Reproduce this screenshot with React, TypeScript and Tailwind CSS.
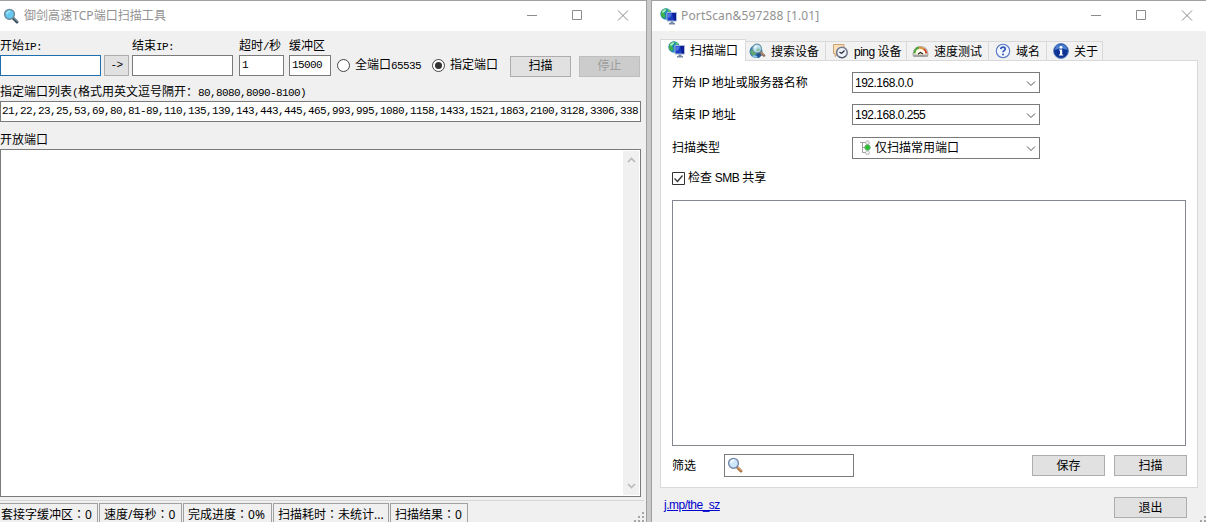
import React from "react";

const song = "font-['Liberation_Mono','Noto_Sans_CJK_SC',monospace]";
const sans = "font-['Liberation_Sans','Noto_Sans_CJK_SC',sans-serif]";
const ui = "font-['Noto_Sans','Noto_Sans_CJK_SC',sans-serif]";

function Half({ children }: { children: React.ReactNode }) {
  return <span className="text-[11px] tracking-[-0.6px]">{children}</span>;
}

function Latin({ children }: { children: React.ReactNode }) {
  return <span className="text-[12px] tracking-[-0.5px]">{children}</span>;
}

function Caption() {
  return (
    <svg width="106" height="30" viewBox="0 0 106 30" fill="none" stroke="#8c8c8c" className="shrink-0">
      <path d="M3 14.5h10M48.5 9.5h9v9h-9zM94 9.5l10 10M104 9.5l-10 10" />
    </svg>
  );
}

function Globe() {
  return (
    <svg width="17" height="17" viewBox="0 0 17 17" className="shrink-0">
      <circle cx="6" cy="6" r="5.7" fill="#1c86c4" />
      <path d="M1 4Q3 0 7 .5L6 3.5 4 5 5.5 8 4 10.5 1 8z" fill="#3fb04c" />
      <path d="M8 1l2.5 1.5-1 2L7.5 3z" fill="#5cc766" />
      <path d="M2 3.5Q4 1 6.5 1.2L5 3.5 3 5z" fill="#a8f0dc" />
      <path d="M7 4.5h9.5v8.5H7z" fill="#1c3cc0" stroke="#a9b9d8" />
      <path d="M12 5h4v7.5h-2z" fill="#0d1f97" />
      <path d="M8 5.5h4l-2 4H8z" fill="#4d74e6" />
      <path d="M10.5 13.5h3V15H15v1.5H9V15h1.5z" fill="#7287a3" />
    </svg>
  );
}

function SearchGlobe() {
  return (
    <svg width="17" height="17" viewBox="0 0 17 17" className="shrink-0">
      <circle cx="7" cy="8.5" r="6.5" fill="#3a7bb2" />
      <path d="M1 9l3-4 3 1 1 4-4 3z" fill="#5fa96a" />
      <path d="M8 10l4-2 1 4-3 3-3-1z" fill="#235592" />
      <path d="M3 13q3-2 6 1-3 2-6-1" fill="#8dc4e8" />
      <path d="M11 9l4 3.5" stroke="#8a7060" strokeWidth="2.6" strokeLinecap="round" />
      <path d="M12 9.5l3 2.5" stroke="#c79a78" />
      <circle cx="8" cy="5.5" r="4.4" fill="#b7dcea" stroke="#6d95a8" strokeWidth="1.1" />
      <path d="M5.5 5.5Q6 3 8.5 3" stroke="#effcff" strokeWidth="1.3" fill="none" />
      <path d="M7 7l3-2 1 2-2 1.5z" fill="#83bd9b" />
    </svg>
  );
}

function PingIcon() {
  return (
    <svg width="17" height="17" viewBox="0 0 17 17" className="shrink-0">
      <path d="M1.5 1.5h10.5v9h-5l-4 3v-3H1.5z" fill="#fae0b9" stroke="#cfa271" />
      <circle cx="9.9" cy="9.5" r="5.3" fill="#edf1f8" stroke="#727b90" strokeWidth="1.6" />
      <path d="M7 14q4 2 7-1" stroke="#464d5c" fill="none" />
      <path d="M9.5 10.5l3-3M9.5 10.5L7.5 9" stroke="#292e38" strokeWidth="1.2" fill="none" />
    </svg>
  );
}

function Gauge() {
  return (
    <svg width="17" height="17" viewBox="0 0 17 17" className="shrink-0">
      <path d="M1 12Q1 3.5 8.5 3.5T16 12z" fill="#fffbe9" stroke="#a7a7a7" />
      <path d="M2.5 10.5Q3 5.2 7 4.8" stroke="#4da53d" strokeWidth="2" fill="none" />
      <path d="M7 4.8q3-.5 5 1.5" stroke="#d98f32" strokeWidth="2" fill="none" />
      <path d="M12 6q2 1.5 2.5 4.5" stroke="#cc3c27" strokeWidth="2" fill="none" />
      <path d="M6 11l2.5-1.5L11 11" stroke="#222" strokeWidth="1.1" fill="none" />
      <path d="M.5 12h16l-1 2h-14z" fill="#a3a3a3" />
    </svg>
  );
}

function Question() {
  return (
    <svg width="16" height="16" viewBox="0 0 16 16" className="shrink-0">
      <circle cx="8" cy="8" r="6.7" fill="#f2f6ff" stroke="#5577c7" strokeWidth="1.1" />
      <path d="M5.8 6.2q.2-2 2.3-2 2.1 0 2.1 1.8 0 1-1.2 1.7Q8 8.2 8 9.2" stroke="#3056ba" strokeWidth="1.7" fill="none" />
      <circle cx="8" cy="11.6" r="1" fill="#3056ba" />
    </svg>
  );
}

function Info() {
  return (
    <svg width="16" height="16" viewBox="0 0 16 16" className="shrink-0">
      <circle cx="8" cy="8" r="7.4" fill="#0d3494" stroke="#587cbd" />
      <path d="M2 7Q2 1.5 8 1.5T14 7Q8 4 2 7" fill="#4c80d0" />
      <circle cx="8" cy="4.3" r="1.4" fill="white" />
      <path d="M6 6.6h3.2v5h1v1H6v-1h1v-4H6z" fill="white" />
    </svg>
  );
}

function Magnifier({ blue = false }: { blue?: boolean }) {
  return (
    <svg width="17" height="17" viewBox="0 0 17 17" className="shrink-0">
      <path d="M10.5 10.5l3.5 3.5" stroke={blue ? "#344b5b" : "#a9713f"} strokeWidth="3" strokeLinecap="round" />
      <path d="M10.5 9.8l4 4" stroke={blue ? "#9db3bf" : "#efc894"} />
      <circle cx="6.5" cy="6.3" r="4.9" fill={blue ? "#65c9ef" : "#cfe7fa"} stroke={blue ? "#6b8799" : "#7286ab"} strokeWidth="1.4" />
      <path d="M3.7 6Q4.2 3.7 7 3.4" stroke={blue ? "#a9e7fb" : "white"} fill="none" strokeWidth="1.3" />
    </svg>
  );
}

function PortsIcon() {
  return (
    <svg width="13" height="16" viewBox="0 0 13 16" className="shrink-0">
      <path d="M1 2.5h6M3.5 2v10.5h4M3.5 7.5h4" stroke="#a0a0a0" fill="none" />
      <circle cx="8.5" cy="2.7" r="1.9" fill="#eee" stroke="#b5b5b5" />
      <circle cx="8.5" cy="12.7" r="1.9" fill="#f5f5f5" stroke="#b5b5b5" />
      <circle cx="8.5" cy="7.5" r="2.7" fill="#27c236" stroke="#68a968" />
    </svg>
  );
}

function Radio({ on = false }: { on?: boolean }) {
  return (
    <svg width="14" height="14" viewBox="0 0 14 14" className="shrink-0">
      <circle cx="6.5" cy="6.5" r="6" fill="white" stroke="#444" />
      {on && <circle cx="6.5" cy="6.5" r="3.5" fill="#333" />}
    </svg>
  );
}

function Grip() {
  return (
    <svg width="10" height="10" viewBox="0 0 10 10" fill="#a6a6a6" className="shrink-0">
      <path d="M8 0h2v2H8zM4 4h2v2H4zM8 4h2v2H8zM0 8h2v2H0zM4 8h2v2H4zM8 8h2v2H8z" />
    </svg>
  );
}

function Button({ label, className, disabled = false }: { label: string; className: string; disabled?: boolean }) {
  return (
    <button
      disabled={disabled}
      className={`flex shrink-0 items-center justify-center border pt-px text-[12px] leading-none ${disabled ? "border-[#bfbfbf] bg-[#cccccc] text-[#9c9c9c]" : "border-[#adadad] bg-[#e1e1e1] text-black"} ${className}`}
    >
      {label}
    </button>
  );
}

function Status({ name, value, className }: { name: string; value: string; className: string }) {
  return (
    <div className={`h-[19px] shrink-0 overflow-hidden whitespace-nowrap border border-b-0 border-[#a0a0a0] pt-[3px] leading-[14px] ${className}`}>
      {name}<span className="font-['Noto_Sans_CJK_TC',sans-serif]">：</span>{value}
    </div>
  );
}

function Scanner() {
  return (
    <section className={`flex h-[522px] w-[647px] shrink-0 flex-col overflow-hidden border-t border-r border-[#a0a0a0] bg-[#f0f0f0] text-[12px] leading-none whitespace-nowrap ${song}`}>
      <header className={`flex h-[30px] shrink-0 items-center bg-white pl-[3px] text-[#929292] ${ui}`}>
        <Magnifier blue />
        <h1 className="ml-[4px] w-[500px] text-[12px] tracking-[0.05px]">御剑高速TCP端口扫描工具</h1>
        <Caption />
      </header>
      <div className="flex h-[46px] shrink-0">
        <label className="w-[132px]">
          <span className="block h-[24px] pt-[10px]">开始<Half>IP:</Half></span>
          <span className="flex items-end">
            <span className="h-[21px] w-[101px] border border-[#1f6fae] bg-white" />
            <span className="ml-[3px] flex h-[21px] w-[25px] items-center justify-center border border-[#adadad] bg-[#e1e1e1]"><Half>-&gt;</Half></span>
          </span>
        </label>
        <label className="w-[107px]">
          <span className="block h-[24px] pt-[10px]">结束<Half>IP:</Half></span>
          <span className="block h-[21px] w-[101px] border border-[#7a7a7a] bg-white" />
        </label>
        <label className="w-[50px]">
          <span className="block h-[24px] pt-[10px]">超时<Half>/</Half>秒</span>
          <span className="block h-[21px] w-[45px] border border-[#7a7a7a] bg-white pt-[3px] pl-[2px]"><Half>1</Half></span>
        </label>
        <label className="w-[48px]">
          <span className="block h-[24px] pt-[10px]">缓冲区</span>
          <span className="block h-[21px] w-[42px] border border-[#7a7a7a] bg-white pt-[3px] pl-[2px]"><Half>15000</Half></span>
        </label>
        <div className="flex pt-[25px]">
          <div className="flex h-[20px] w-[95px] items-center gap-[4px]"><Radio /><span>全端口<Half>65535</Half></span></div>
          <div className="flex h-[20px] w-[78px] items-center gap-[4px]"><Radio on /><span>指定端口</span></div>
          <Button label="扫描" className="h-[21px] w-[61px]" />
          <Button label="停止" disabled className="ml-[8px] h-[21px] w-[61px]" />
        </div>
      </div>
      <p className="h-[24px] shrink-0 pt-[10px]">指定端口列表<Half>(</Half>格式用英文逗号隔开：<Half>80,8080,8090-8100)</Half></p>
      <div className="h-[21px] w-[641px] shrink-0 overflow-hidden border border-[#7a7a7a] bg-white pt-[3px] pl-[1px]">
        <Half>21,22,23,25,53,69,80,81-89,110,135,139,143,443,445,465,993,995,1080,1158,1433,1521,1863,2100,3128,3306,338</Half>
      </div>
      <p className="h-[27px] shrink-0 pt-[13px]">开放端口</p>
      <div className="flex h-[348px] w-[641px] shrink-0 justify-end border border-[#7a7a7a] bg-white p-px">
        <div className="flex w-[16px] flex-col items-center justify-between bg-[#f0f0f0] py-[6px]">
          <svg width="9" height="7" viewBox="0 0 9 7" fill="none" stroke="#bababa" strokeWidth="1.7"><path d="M1 5l3.5-3.5L8 5" /></svg>
          <svg width="9" height="7" viewBox="0 0 9 7" fill="none" stroke="#bababa" strokeWidth="1.7"><path d="M1 2l3.5 3.5L8 2" /></svg>
        </div>
      </div>
      <footer className={`mt-[3px] flex h-[22px] w-[644px] shrink-0 border-t border-[#d7d7d7] pt-[2px] ${ui}`}>
        <Status name="套接字缓冲区" value="0" className="w-[98px] border-l-0 pl-[1px]" />
        <Status name="速度/每秒" value="0" className="ml-[1px] w-[83px] pl-[4px]" />
        <Status name="完成进度" value="0%" className="ml-[1px] w-[89px] pl-[4px]" />
        <Status name="扫描耗时" value="未统计..." className="ml-[1px] w-[116px] pl-[4px]" />
        <Status name="扫描结果" value="0" className="ml-[1px] w-[78px] pl-[4px]" />
        <div className="flex grow items-end justify-end"><Grip /></div>
      </footer>
    </section>
  );
}

function Tab({ icon, label, className }: { icon: React.ReactNode; label: React.ReactNode; className: string }) {
  return (
    <div className={`flex h-[19px] shrink-0 items-center border-t border-r border-[#d9d9d9] bg-[#f2f2f2] ${className}`}>
      {icon}<span className="ml-[5px] pt-[2px]">{label}</span>
    </div>
  );
}

function Combo({ children, className }: { children: React.ReactNode; className: string }) {
  return (
    <div className={`flex w-[188px] items-center justify-between border border-[#7a7a7a] bg-white pr-[3px] pl-[2px] ${className}`}>
      <div className="flex items-center">{children}</div>
      <svg width="10" height="7" viewBox="0 0 10 7" fill="none" stroke="#555" className="mt-[1px]"><path d="M1 1.5l4 4 4-4" /></svg>
    </div>
  );
}

function PortScan() {
  return (
    <section className={`flex h-[522px] w-[555px] shrink-0 flex-col overflow-hidden border-t border-l border-[#a0a0a0] bg-[#f0f0f0] text-[12px] leading-none whitespace-nowrap ${sans}`}>
      <header className={`flex h-[30px] shrink-0 items-center bg-white pl-[8px] text-[#929292] ${ui}`}>
        <Globe />
        <h1 className="ml-[4px] w-[407px] text-[12px] tracking-[0.15px]">PortScan&amp;597288 [1.01]</h1>
        <Caption />
      </header>
      <nav className="mt-[8px] ml-[8px] flex h-[21px] shrink-0 items-end">
        <div className="z-10 -mb-px flex h-[22px] w-[86px] shrink-0 items-start border border-b-0 border-[#d9d9d9] bg-white pt-px pl-[7px]">
          <Globe /><span className="ml-[5px] pt-[4px]">扫描端口</span>
        </div>
        <Tab icon={<SearchGlobe />} label="搜索设备" className="w-[80px] pl-[3px]" />
        <Tab icon={<PingIcon />} label={<><Latin>ping </Latin>设备</>} className="w-[81px] pl-[6px]" />
        <Tab icon={<Gauge />} label="速度测试" className="w-[82px] pl-[5px]" />
        <Tab icon={<Question />} label="域名" className="w-[58px] pl-[6px]" />
        <Tab icon={<Info />} label="关于" className="w-[56px] pl-[6px]" />
      </nav>
      <main className="ml-[8px] flex h-[428px] w-[538px] shrink-0 flex-col border border-[#d9d9d9] bg-white pl-[11px]">
        <div className="mt-[11px] flex h-[21px] items-center"><span className="w-[180px]">开始<Latin> IP </Latin>地址或服务器名称</span><Combo className="h-[21px]"><Latin>192.168.0.0</Latin></Combo></div>
        <div className="mt-[11px] flex h-[21px] items-center"><span className="w-[180px]">结束<Latin> IP </Latin>地址</span><Combo className="h-[21px]"><Latin>192.168.0.255</Latin></Combo></div>
        <div className="mt-[12px] flex h-[22px] items-center"><span className="w-[180px]">扫描类型</span><Combo className="h-[22px]"><span className="mr-[3px] ml-[4px]"><PortsIcon /></span>仅扫描常用端口</Combo></div>
        <div className="mt-[12px] flex h-[14px] items-center gap-[3px]">
          <svg width="13" height="13" viewBox="0 0 13 13" fill="white" stroke="#333"><path d="M.5.5h12v12H.5z" /><path d="M2.5 6.5l3 3 5-6" strokeWidth="1.3" /></svg>
          <span>检查<Latin> SMB </Latin>共享</span>
        </div>
        <div className="mt-[15px] h-[246px] w-[514px] shrink-0 border border-[#828790] bg-white" />
        <div className="mt-[8px] flex h-[23px] items-center">
          <span className="w-[52px]">筛选</span>
          <div className="flex h-[23px] w-[130px] items-center border border-[#7a7a7a] pl-[2px]"><Magnifier /></div>
          <Button label="保存" className="ml-[178px] h-[21px] w-[73px]" />
          <Button label="扫描" className="ml-[9px] h-[21px] w-[73px]" />
        </div>
      </main>
      <footer className="flex h-[34px] shrink-0">
        <a className="mt-[10px] ml-[12px] h-[14px] w-[450px] text-[12px] leading-[14px] tracking-[-0.5px] text-[#0000cc] underline">j.mp/the_sz</a>
        <Button label="退出" className="mt-[9px] h-[21px] w-[73px]" />
        <div className="-mr-[4px] flex grow items-end justify-end overflow-hidden"><Grip /></div>
      </footer>
    </section>
  );
}

export default function App() {
  return (
    <div className="flex h-[522px] w-[1206px] overflow-hidden bg-[#cacaca]">
      <Scanner />
      <div className="w-[4px] shrink-0 bg-[#cacaca]" />
      <PortScan />
    </div>
  );
}
